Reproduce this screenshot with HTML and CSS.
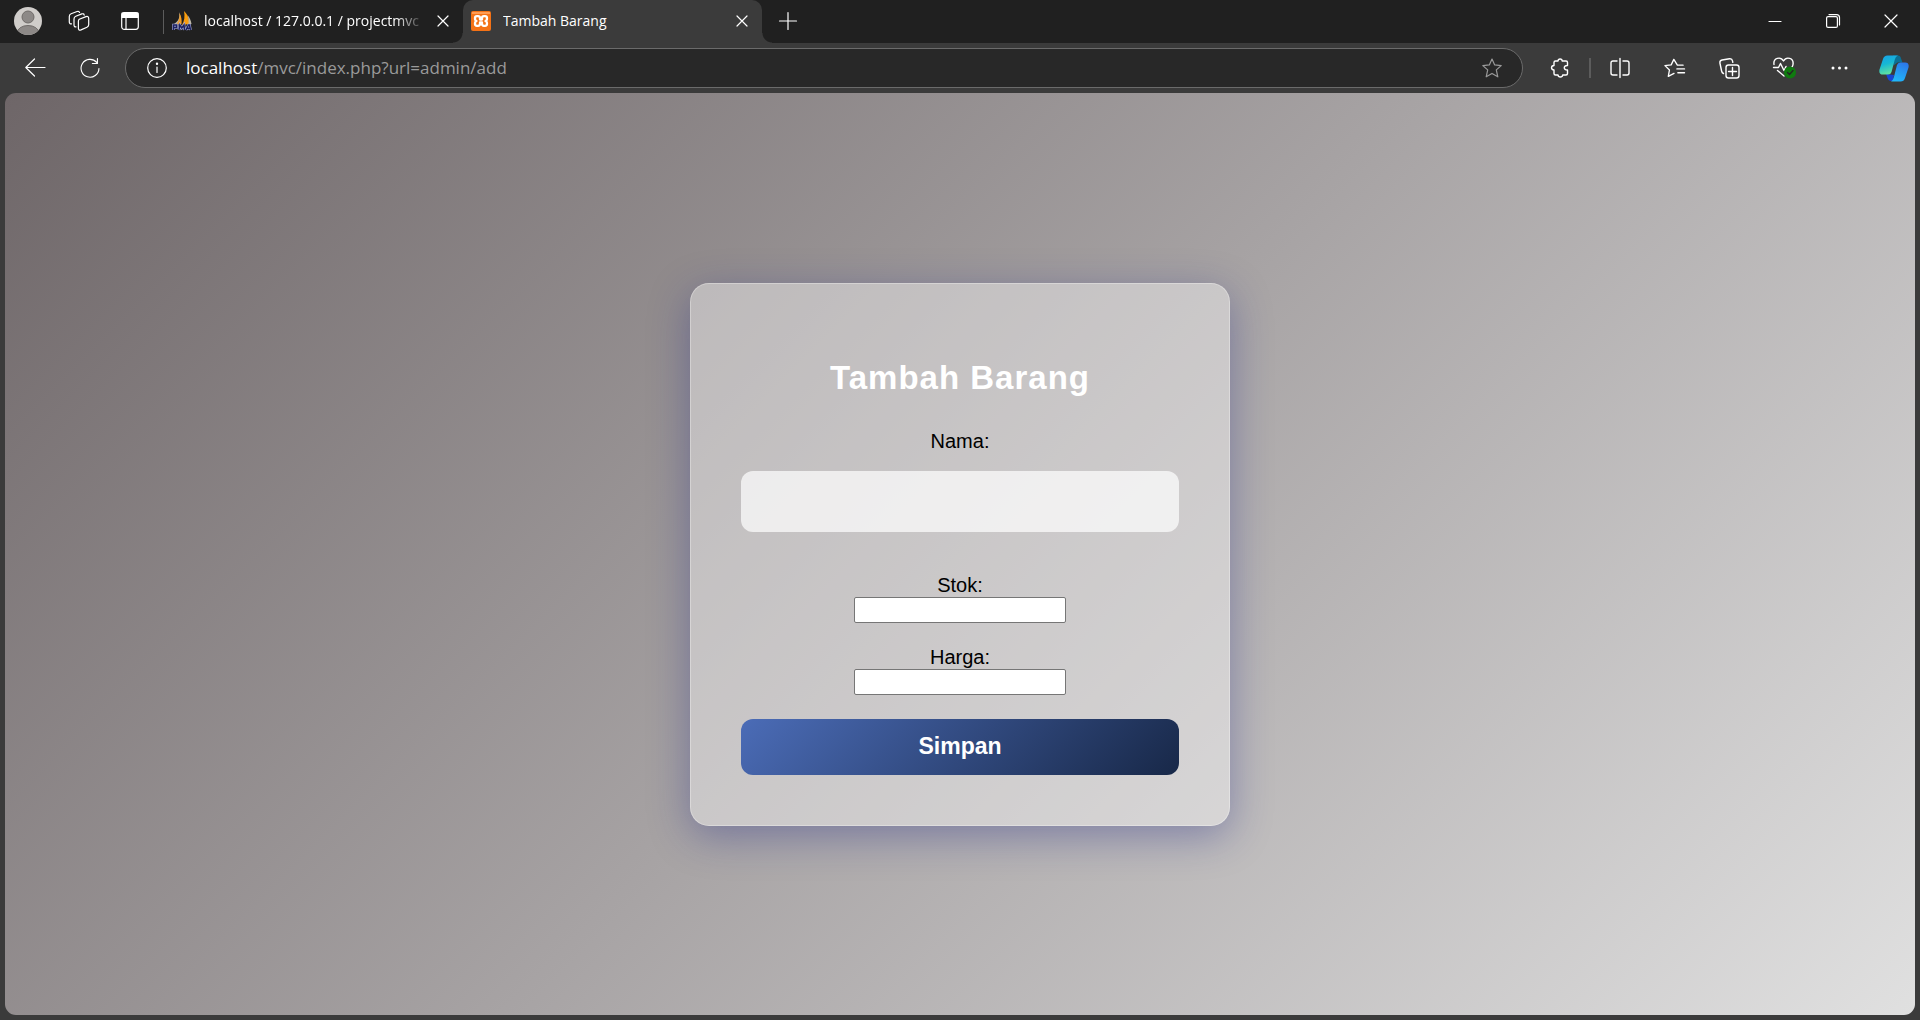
FILE: index.html
```html
<!DOCTYPE html>
<html lang="id">
<head>
<meta charset="utf-8">
<title>Tambah Barang</title>
<link rel="stylesheet" href="styles.css">
</head>
<body>
<header class="browser">
  <div class="tab-strip">
    <button class="cell small" aria-label="Profile">
      <svg width="28" height="28" viewBox="0 0 28 28"><clipPath id="disc"><circle cx="14" cy="14" r="14"/></clipPath><g clip-path="url(#disc)"><rect width="28" height="28" fill="#d0cdca"/><circle cx="14" cy="10" r="6" fill="#8d8987" stroke="#6f6b69"/><ellipse cx="14" cy="26" rx="11" ry="7.500" fill="#8d8987" stroke="#6f6b69"/></g></svg>
    </button>
    <button class="cell small" aria-label="Workspaces">
      <svg class="line" width="22" height="22" viewBox="0 0 22 22"><path d="M11.300 9.200 18 6.600q2.700-.8 2.700 1.900v6.300q0 1.700-1.700 2.400l-6 2.700q-2.600 1-2.600-1.600v-7q0-1.500.9-2Z"/><path d="M8 16.800q-2 .2-2-1.800V9q0-2 1.800-2.700l6-2.400q2-.6 2.400 1.200M3.500 13.800Q1.300 14 1.300 12V6.500q0-2 1.800-2.700l6-2.300q1.900-.6 2.400 1"/></svg>
    </button>
    <button class="cell small" aria-label="Tab actions">
      <svg class="line" width="18" height="18" viewBox="0 0 18 18"><rect x=".7" y=".7" width="16.600" height="16.600" rx="2.500"/><path d="M1 1h16v4.500H1z" fill="#fff"/><path d="M5 5v12"/></svg>
    </button>
    <span class="strip-rule"></span>
    <div class="tab">
      <svg width="20" height="20" viewBox="0 0 20 20"><path d="M7 1c1 5 0 9-5 12 3 0 5-.5 7-1C9 7 8.500 4 7 1Z" fill="#b9b4a6"/><path d="M7.500 2c2 4 2.500 7 2 11l-5 .5C7 10 8 6 7.500 2Z" fill="#f29a1f"/><path d="M12 0c4 4 5.500 8 5 13l-7 1c2.500-4 3-9 2-14Z" fill="#f89c0e"/><path d="M15.500 4c2.500 3 3.500 6 4 9l-3 .5c.3-3 0-6.500-1-9.500Z" fill="#bdb8a8"/><path d="M1.500 19v-5h3v2.500h-3M7 19l.8-5 2 3 2.200-3 .5 5M14 19l2.500-5h1l1 5m-3.500-1.700h3" fill="none" stroke="#a9aee0" stroke-width="2.600"/><path d="M1.500 19v-5h3v2.500h-3M7 19l.8-5 2 3 2.200-3 .5 5M14 19l2.500-5h1l1 5m-3.500-1.700h3" fill="none" stroke="#1d2260" stroke-width="1.500"/></svg>
      <span class="tab-title faded">localhost / 127.0.0.1 / projectmvc</span>
      <button class="tab-close" aria-label="Close tab"><svg class="line" width="12" height="12" viewBox="0 0 12 12"><path d="m1 1 10 10M11 1 1 11"/></svg></button>
    </div>
    <div class="tab active">
      <svg width="20" height="20" viewBox="0 0 20 20"><rect width="20" height="20" rx="2" fill="#f47216"/><path d="M1 1h18v2H1z" fill="#ff9d55"/><path d="M7 5.200H6Q4 5.200 4 7.200q0 2.400 1.500 2.800Q4 10.400 4 12.800q0 2 2 2h1q2 0 2-2v-1.300h2v1.300q0 2 2 2h1q2 0 2-2 0-2.400-1.500-2.800Q16 9.600 16 7.200q0-2-2-2h-1q-2 0-2 2v1.300H9V7.200q0-2-2-2Z" fill="none" stroke="#fff" stroke-width="2.300" stroke-linejoin="round"/></svg>
      <span class="tab-title">Tambah Barang</span>
      <button class="tab-close" aria-label="Close tab"><svg class="line" width="12" height="12" viewBox="0 0 12 12"><path d="m1 1 10 10M11 1 1 11"/></svg></button>
    </div>
    <button class="cell small" aria-label="New tab"><svg class="line" width="18" height="18" viewBox="0 0 18 18"><path d="M9 .5v17M.5 9h17"/></svg></button>
    <div class="window-controls">
      <button class="cell wide" aria-label="Minimize"><svg class="line" width="14" height="14" viewBox="0 0 14 14"><path d="M1 7.500h12"/></svg></button>
      <button class="cell wide" aria-label="Restore"><svg class="line" width="14" height="14" viewBox="0 0 14 14"><rect x=".6" y="2.600" width="10.800" height="10.800" rx="1.500"/><path d="M3 .6h7.500q3 0 3 3V11"/></svg></button>
      <button class="cell wide" aria-label="Close"><svg class="line" width="14" height="14" viewBox="0 0 14 14"><path d="m1 1 12 12m0-12L1 13"/></svg></button>
    </div>
  </div>
  <div class="toolbar">
    <button class="cell" aria-label="Back"><svg class="line" width="20" height="20" viewBox="0 0 20 20"><path d="M20 9.500H1M9.500 1 .8 9.500l8.700 8.500"/></svg></button>
    <button class="cell" aria-label="Refresh"><svg class="line" width="20" height="20" viewBox="0 0 21 21"><path d="M17.500 4.500A9.400 9.400 0 1 0 19.900 11M18.300.5v5.300H13"/></svg></button>
    <div class="address">
      <svg class="line" width="20" height="20" viewBox="0 0 20 20"><circle cx="10" cy="10" r="9.300"/><path d="M10 9v5.500"/><circle cx="10" cy="5.700" r=".6" fill="#fff"/></svg>
      <div class="url" role="textbox" aria-label="Address" contenteditable="true" spellcheck="false"><span class="host">localhost</span>/mvc/index.php?url=admin/add</div>
      <svg class="line dim" width="20" height="20" viewBox="0 0 20 20"><path d="m10 1 2.700 5.900 6.500.7-4.900 4.300 1.500 6.900-5.800-3.400-5.800 3.400 1.500-6.900L.8 7.600l6.500-.7Z"/></svg>
    </div>
    <button class="cell" aria-label="Extensions"><svg class="line thick" width="20" height="20" viewBox="0 0 20 20"><path d="M5.500 3H8c.2-2.700 4-2.700 4.200 0H16q1.500 0 1.500 1.500V7.500c-4.300-.2-4.300 4.700 0 4.500v3.500q0 1.500-1.500 1.500h-3.300c-.3 2.700-4.400 2.700-4.700 0H5.500Q4 17 4 15.500V12C.7 11.800.7 7.700 4 7.500v-3Q4 3 5.500 3Z"/></svg></button>
    <span class="tool-rule"></span>
    <button class="cell" aria-label="Split screen"><svg class="line thick" width="20" height="20" viewBox="0 0 20 20"><path d="M7 3H3Q1 3 1 5v10q0 2 2 2h4M13 3h4q2 0 2 2v10q0 2-2 2h-4M10 .5v19"/></svg></button>
    <button class="cell" aria-label="Favorites"><svg class="line thick" width="21" height="20" viewBox="0 0 22 20"><path d="M20 7h-6L10.300 1 7.500 6.700 1 7.500l4.700 4.600-1.200 6.700 6-3.200M13.500 11h8M14.500 15h7"/></svg></button>
    <button class="cell" aria-label="Collections"><svg class="line thick" width="21" height="21" viewBox="0 0 21 21"><rect x="7" y="7" width="13" height="13" rx="2.500"/><path d="M13.500 9.500v8M9.500 13.500h8M4.500 15.500Q3 15 2.600 13L.9 5Q.6 2.500 3 2L10.500.8q2.500-.3 3 2l.3 1.500"/></svg></button>
    <button class="cell" aria-label="Browser essentials"><svg class="line thick" width="23" height="22" viewBox="0 0 23 22"><path d="M1 7.500C0 1 7.500-1 10.500 4c3-5 10.500-3 9.500 3.500q-.2 1.500-1 2.500M.5 10.500h5l2-4 3.500 7 2-4M4.500 13.500l6.500 5.500"/><circle cx="17" cy="15.500" r="6" fill="#0f7b0f" stroke="none"/><path d="m14.500 15.500 2 2 3.500-4" stroke="#252525"/></svg></button>
    <button class="cell" aria-label="Settings and more"><svg width="17" height="4" viewBox="0 0 17 4" fill="#fff"><circle cx="2" cy="2" r="1.500"/><circle cx="8.500" cy="2" r="1.500"/><circle cx="15" cy="2" r="1.500"/></svg></button>
    <button class="cell" aria-label="Copilot"><svg width="30" height="27" viewBox="0 0 30 27"><defs><linearGradient id="ca" x2=".3" y2="1"><stop stop-color="#18a0e8"/><stop offset=".5" stop-color="#16b8d5"/><stop offset="1" stop-color="#5fe0a0"/></linearGradient><linearGradient id="cb" x1=".7" x2=".3" y2="1"><stop stop-color="#2c78e8"/><stop offset="1" stop-color="#20b9fb"/></linearGradient></defs><path d="M14 .5h5q2.500 0 3 3l1.500 4h-5l-4 3Z" fill="#0b6f95"/><path d="m7 19 8 1-1 6h-2q-2.500 0-3.500-3Z" fill="#1746d3"/><path d="M8.500.5H19q-2.500 1-3.200 4L12.500 17q-.7 2.500-3.500 2.500H4q-4.500 0-3.500-5L4 4Q5 .5 8.500.5Z" fill="url(#ca)"/><path d="M21.500 7.500H26q4.500 0 3.500 5L26 23q-1 3.500-4.500 3.500H12q2-1 2.800-4L18 10q.7-2.500 3.500-2.500Z" fill="url(#cb)"/></svg></button>
  </div>
</header>
<main class="page">
  <form class="card">
    <h2 class="title">Tambah Barang</h2>
    <label class="label" for="nama">Nama:</label>
    <input class="field-large" id="nama" name="nama" type="text">
    <div class="field">
      <label class="label" for="stok">Stok:</label>
      <input class="field-plain" id="stok" name="stok" type="number">
    </div>
    <div class="field">
      <label class="label" for="harga">Harga:</label>
      <input class="field-plain" id="harga" name="harga" type="number">
    </div>
    <button class="submit" type="submit">Simpan</button>
  </form>
</main>
</body>
</html>
```
FILE: styles.css
```css
* { box-sizing: border-box; }

body {
  margin: 0;
  min-height: 100vh;
  display: flex;
  flex-direction: column;
  background: #3b3b3b;
  font-family: "Liberation Sans", Arial, sans-serif;
}

button {
  margin: 0;
  padding: 0;
  border: 0;
  background: none;
  color: inherit;
}

svg { display: block; flex: none; }

.line {
  fill: none;
  stroke: #fff;
  stroke-width: 1.2;
  stroke-linecap: round;
  stroke-linejoin: round;
  overflow: visible;
}
.line.thick { stroke-width: 1.4; }
.line.dim { stroke: #9a9a9a; }

/* Browser frame */
.browser {
  color: #fff;
  font-family: "Open Sans", "Noto Sans", sans-serif;
}

.tab-strip {
  display: flex;
  align-items: flex-start;
  height: 43px;
  padding-left: 2px;
  background: #202020;
}

.cell {
  display: flex;
  align-items: center;
  justify-content: center;
  width: 55px;
  height: 42px;
  flex: none;
}
.cell.small { width: 51px; }
.cell.wide { width: 58px; }
.cell:last-child { width: 53px; }
.cell.wide:last-child { width: 58px; }

.strip-rule {
  width: 1px;
  height: 24px;
  margin: 10px 0 0 8px;
  background: #5c5c5c;
}

.tab {
  position: relative;
  display: flex;
  align-items: center;
  gap: 12px;
  width: 299px;
  height: 43px;
  padding: 0 14px 1px 8px;
}

.tab.active {
  background: #3b3b3b;
  border-radius: 10px 10px 0 0;
}
.tab.active::before,
.tab.active::after {
  content: "";
  position: absolute;
  bottom: 0;
  width: 10px;
  height: 10px;
}
.tab.active::before {
  right: 100%;
  background: radial-gradient(circle at 0 0, #202020 9px, #3b3b3b 10px);
}
.tab.active::after {
  left: 100%;
  background: radial-gradient(circle at 100% 0, #202020 9px, #3b3b3b 10px);
}

.tab-title {
  flex: 1;
  min-width: 0;
  padding-bottom: 1px;
  overflow: hidden;
  white-space: nowrap;
  font-size: 14px;
  line-height: 20px;
}
.tab-title.faded {
  mask-image: linear-gradient(to left, transparent, #000 30px);
}

.window-controls { display: flex; margin-left: auto; }

.toolbar {
  display: flex;
  align-items: center;
  height: 50px;
  padding-left: 7px;
}

.address {
  flex: 1;
  display: flex;
  align-items: center;
  gap: 19px;
  height: 40px;
  margin: 0 9px 0 8px;
  padding: 0 20px 0 21px;
  border: 1px solid #6b6b6b;
  border-radius: 20px;
  background: #282828;
}

.url {
  flex: 1;
  color: #9a9a9a;
  font-size: 17px;
  line-height: 24px;
  white-space: nowrap;
  outline: none;
}
.host { color: #fff; }

.tool-rule {
  width: 2px;
  height: 20px;
  margin: 0 1px 0 2px;
  background: #5c5c5c;
}

/* Page */
.page {
  flex: 1;
  display: flex;
  align-items: center;
  justify-content: center;
  margin: 0 5px 5px;
  border-radius: 11px;
  background: linear-gradient(135deg, #6e6668, #e0e0e0);
}

.card {
  display: flex;
  flex-direction: column;
  align-items: center;
  width: 540px;
  padding: 50px;
  border: 1px solid rgba(255, 255, 255, 0.3);
  border-radius: 19px;
  background: rgba(255, 255, 255, 0.4);
  box-shadow: 0 10px 40px rgba(31, 38, 135, 0.37);
}

.title {
  margin: 24px 0 31px;
  color: #fff;
  font-size: 33px;
  line-height: 40px;
  letter-spacing: 1px;
}

.label {
  font-size: 20px;
  line-height: 24px;
  color: #000;
}

.field-large {
  width: 100%;
  height: 61px;
  margin: 18px 0 19px;
  padding: 0 18px;
  border: 0;
  border-radius: 12px;
  background: rgba(255, 255, 255, 0.7);
  font-size: 20px;
}

.field {
  display: flex;
  flex-direction: column;
  align-items: center;
  margin-top: 22px;
}

.field-plain {
  width: 212px;
  height: 26px;
  padding: 1px 2px;
  border: 1px solid #767676;
  border-radius: 2px;
  background: #fff;
  font-size: 16px;
}

.submit {
  width: 100%;
  height: 56px;
  margin-top: 24px;
  border-radius: 12px;
  background: linear-gradient(135deg, #4b6cb7, #182848);
  color: #fff;
  font-family: inherit;
  font-size: 23px;
  font-weight: bold;
}
```
